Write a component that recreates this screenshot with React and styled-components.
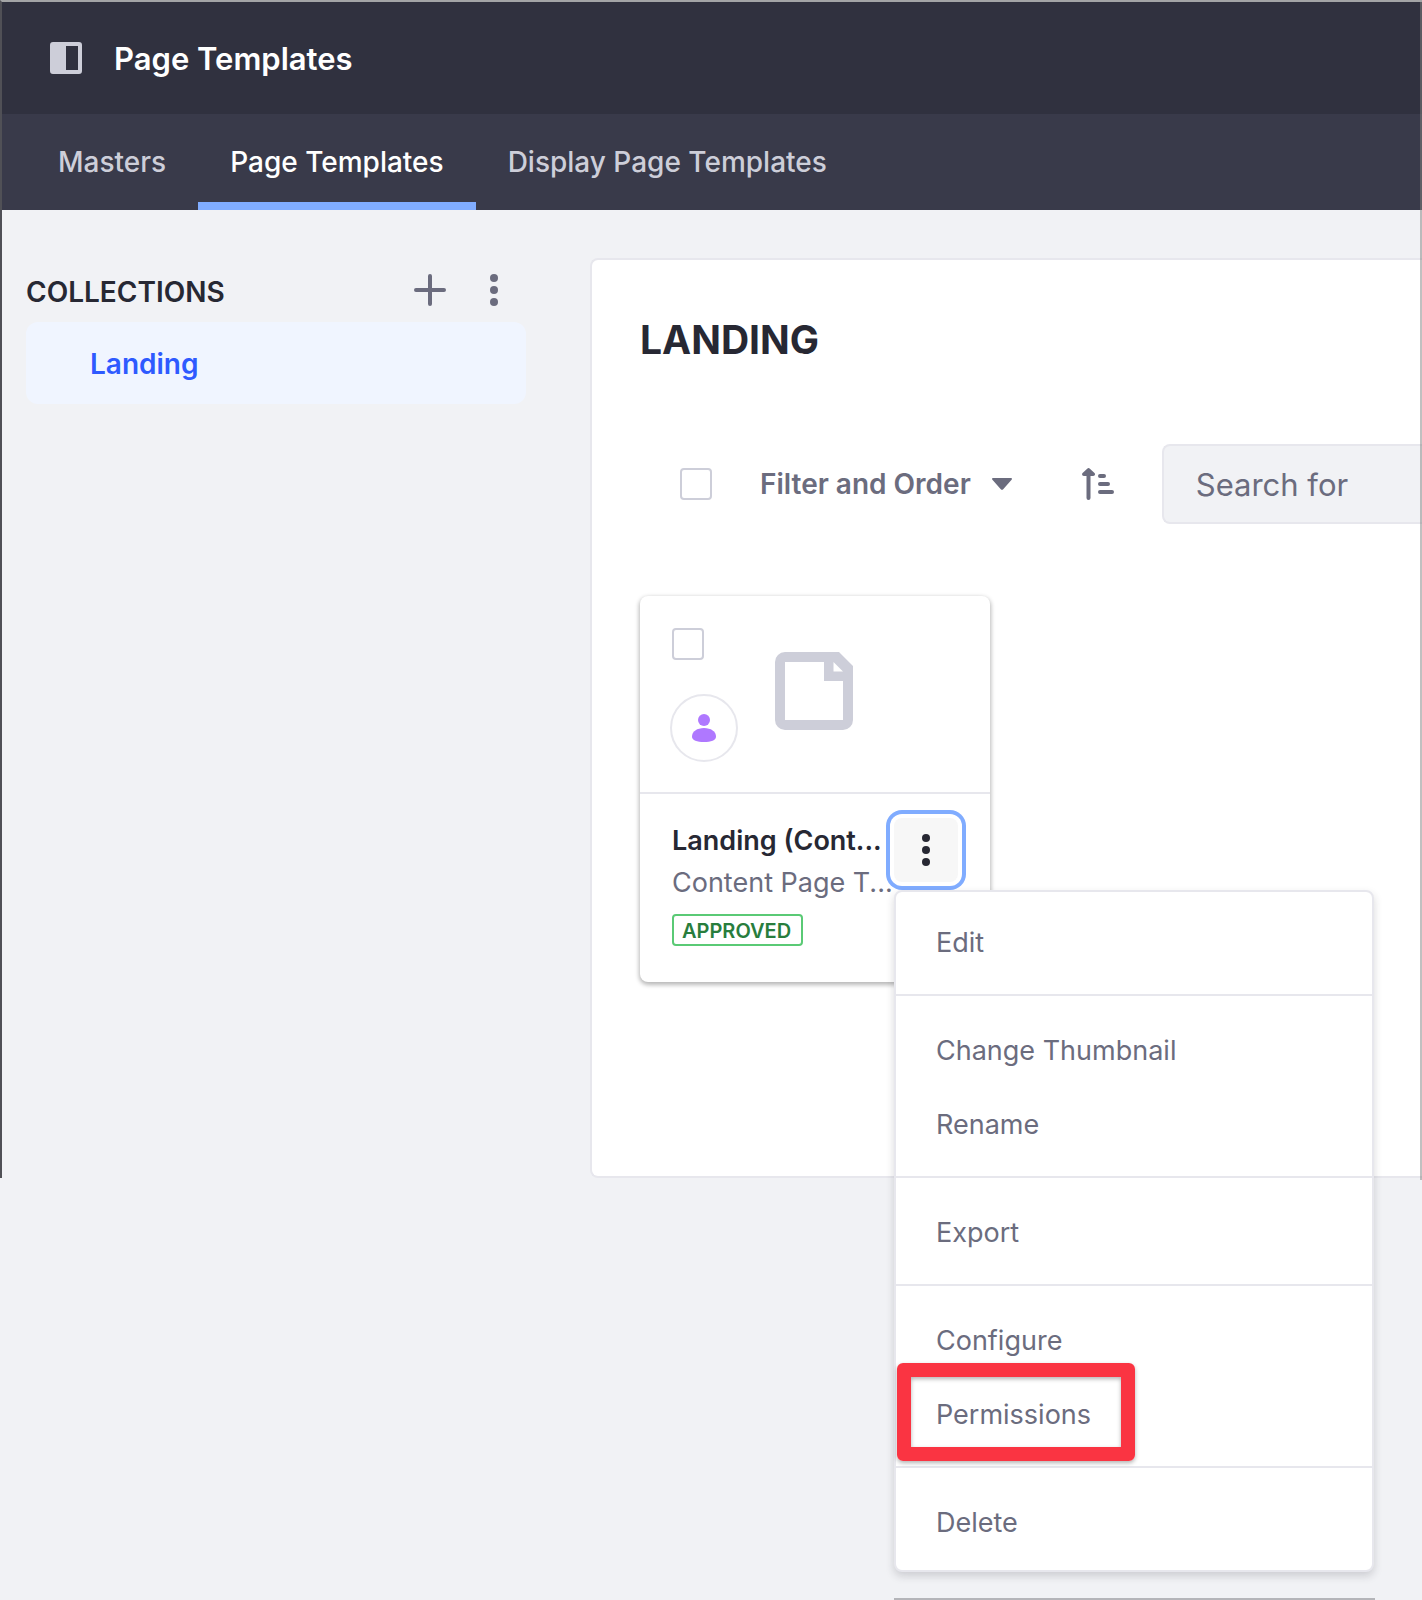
import React from "react";
import styled, { createGlobalStyle } from "styled-components";

const GlobalStyle = createGlobalStyle`
  *, *::before, *::after { box-sizing: border-box; }
  body {
    margin: 0;
    min-height: 100vh;
    overflow-x: hidden;
    background: #f1f2f5;
    color: #272833;
    font-family: Inter, "Liberation Sans", sans-serif;
    font-size: 28px;
    line-height: 32px;
  }
  button, input { font: inherit; color: inherit; }
  h1, h2, h3, p, ul { margin: 0; padding: 0; font: inherit; }
  ul { list-style: none; }
`;

const Frame = styled.div`
  position: relative;
  min-height: 1178px;
  border-top: 2px solid #a3a4a6;
  border-left: 2px solid #505056;

  &::after {
    content: "";
    position: absolute;
    top: 0;
    right: 0;
    bottom: -2px;
    width: 2px;
    background: rgba(131, 131, 131, 0.51);
    pointer-events: none;
  }
`;

const Header = styled.header`
  display: flex;
  align-items: center;
  gap: 32px;
  height: 112px;
  padding: 0 48px;
  background: #30313f;
  color: #fff;
`;

const IconButton = styled.button`
  display: flex;
  padding: 0;
  border: 0;
  background: none;
  color: ${(p) => p.$color || "#6b6c7e"};
  cursor: pointer;
`;

const PageTitle = styled.h1`
  padding-top: 2px;
  font-size: 31px;
  font-weight: 600;
`;

const Tabs = styled.nav`
  display: flex;
  height: 96px;
  padding: 0 24px;
  background: #393a4a;
`;

const Tab = styled.a`
  display: flex;
  align-items: center;
  padding: 0 32px;
  color: ${(p) => (p.$active ? "#fff" : "#cdced9")};
  font-weight: 500;
  text-decoration: none;
  box-shadow: ${(p) => (p.$active ? "inset 0 -8px #80acff" : "none")};
`;

const Body = styled.div`
  display: flex;
  gap: 64px;
  padding: 48px 0 0 24px;
`;

const Sidebar = styled.aside`
  flex: 0 0 500px;
`;

const SidebarHead = styled.div`
  display: flex;
  align-items: center;
  height: 64px;
  padding-right: 16px;
  gap: 32px;
`;

const SidebarTitle = styled.h2`
  flex: 1;
  padding-top: 4px;
  font-weight: 600;
`;

const CollectionLink = styled.a`
  display: flex;
  align-items: center;
  height: 82px;
  padding: 2px 64px 0;
  border-radius: 12px;
  background: #f0f5ff;
  color: #2e5aff;
  font-weight: 600;
  text-decoration: none;
`;

const Panel = styled.main`
  flex: 1;
  min-width: 0;
  min-height: 920px;
  padding: 56px 0 48px 48px;
  border: 2px solid #e7e7ed;
  border-right: 0;
  border-radius: 8px 0 0 8px;
  background: #fff;
`;

const PanelTitle = styled.h2`
  font-size: 39px;
  font-weight: 700;
  line-height: 48px;
`;

const Toolbar = styled.div`
  display: flex;
  align-items: center;
  height: 80px;
  margin: 80px 0 72px;
  padding-left: 40px;
`;

const Checkbox = styled.input.attrs({ type: "checkbox" })`
  appearance: none;
  flex: none;
  width: 32px;
  height: 32px;
  margin: 0;
  border: 2px solid #cdced9;
  border-radius: 4px;
  background: #fff;
`;

const FilterButton = styled(IconButton)`
  align-items: center;
  gap: 21px;
  margin: 0 70px 0 48px;
  font-weight: 600;
  white-space: nowrap;
`;

const SearchInput = styled.input`
  flex: 1;
  min-width: 0;
  height: 80px;
  margin-left: 48px;
  padding: 0 32px;
  border: 2px solid #e7e7ed;
  border-right: 0;
  border-radius: 8px 0 0 8px;
  background: #f1f2f5;
  font-size: 31px;
  outline: 0;

  &::placeholder { color: #6b6c7e; opacity: 1; }
`;

const Card = styled.article`
  width: 350px;
  border-radius: 8px;
  background: #fff;
  box-shadow: 0 2px 4px 1px rgba(0, 0, 0, 0.28);
`;

const CardPreview = styled.div`
  display: flex;
  gap: 37px;
  height: 198px;
  padding: 32px 30px;
  border-bottom: 2px solid #e7e7ed;
`;

const CardMarks = styled.div`
  display: flex;
  flex-direction: column;
  gap: 34px;

  & > input { margin-left: 2px; }
`;

const Sticker = styled.span`
  display: flex;
  flex: none;
  align-items: center;
  justify-content: center;
  width: 68px;
  height: 68px;
  border: 2px solid #e7e7ed;
  border-radius: 50%;
  background: #fff;
`;

const PreviewArt = styled.div`
  padding-top: 24px;
`;

const CardFooter = styled.div`
  display: flex;
  height: 188px;
  padding: 24px 32px 0;
`;

const CardText = styled.div`
  display: flex;
  flex-direction: column;
  align-items: flex-start;
  width: 222px;
  padding-top: 2px;
  font-size: 27px;
  line-height: 42px;
  white-space: nowrap;
`;

const CardTitle = styled.h3`
  font-weight: 600;
`;

const CardSubtitle = styled.p`
  color: #6b6c7e;
`;

const Label = styled.span`
  height: 32px;
  margin-top: 10px;
  padding: 1px 10px 0 8px;
  border: 2px solid #5aca75;
  border-radius: 4px;
  color: #287d3d;
  font-size: 20px;
  font-weight: 600;
  line-height: 28px;
`;

const Actions = styled.div`
  position: relative;
  flex: none;
  width: 64px;
  height: 64px;
`;

const ActionsButton = styled(IconButton)`
  align-items: center;
  justify-content: center;
  width: 64px;
  height: 64px;
  border-radius: 8px;
  background: #f7f7f7;
  box-shadow: 0 0 0 4px #fff, 0 0 0 8px #80acff;
`;

const Menu = styled.ul`
  position: absolute;
  z-index: 1;
  top: calc(100% + 8px);
  left: 0;
  width: 480px;
  padding: 12px 0;
  border: 2px solid #e7e7ed;
  border-radius: 8px;
  background: #fff;
  box-shadow: 0 4px 8px rgba(39, 40, 51, 0.18);

  &::after {
    content: "";
    position: absolute;
    top: calc(100% + 28px);
    left: -2px;
    right: -3px;
    height: 2px;
    background: #b4b5b9;
  }
`;

const MenuItem = styled.li`
  position: relative;
`;

const MenuButton = styled.button`
  display: block;
  width: 100%;
  height: 74px;
  padding: 4px 40px 0;
  border: 0;
  background: none;
  color: #6b6c7e;
  font-size: 27px;
  text-align: left;
  cursor: pointer;
`;

const Divider = styled.li`
  height: 2px;
  margin: 16px 0;
  background: #e7e7ed;
`;

const Highlight = styled.span`
  position: absolute;
  top: -13px;
  left: 1px;
  width: 238px;
  height: 98px;
  border: 14px solid #fa3442;
  border-radius: 6px;
  box-shadow: 0 2px 4px rgba(0, 0, 0, 0.3), inset 0 2px 4px rgba(0, 0, 0, 0.3);
  pointer-events: none;
`;

const Dots = () => (
  <svg width="32" height="32" viewBox="0 0 32 32" fill="currentColor" aria-hidden="true">
    <circle cx="16" cy="4" r="4" />
    <circle cx="16" cy="16" r="4" />
    <circle cx="16" cy="28" r="4" />
  </svg>
);

const PanelIcon = () => (
  <svg width="32" height="32" viewBox="0 0 32 32" fill="currentColor" aria-hidden="true">
    <path fillRule="evenodd" d="M3 0h26a3 3 0 0 1 3 3v26a3 3 0 0 1-3 3H3a3 3 0 0 1-3-3V3a3 3 0 0 1 3-3Zm13 4v24h12V4Z" />
  </svg>
);

const PlusIcon = () => (
  <svg width="32" height="32" viewBox="0 0 32 32" stroke="currentColor" strokeWidth="4" strokeLinecap="round" aria-hidden="true">
    <path d="M16 2v28M2 16h28" />
  </svg>
);

const CaretIcon = () => (
  <svg width="20" height="12" viewBox="0 0 20 12" fill="currentColor" aria-hidden="true">
    <path d="M1 0h18c1 0 1.300 1 .6 1.700l-8.400 9.500c-.7.800-1.700.8-2.400 0L.4 1.700C-.3 1 0 0 1 0Z" />
  </svg>
);

const SortIcon = () => (
  <svg width="32" height="32" viewBox="0 0 32 32" fill="none" stroke="currentColor" strokeWidth="4" strokeLinecap="round" aria-hidden="true">
    <path d="M6.500 4v26M18 8h4M18 16h8M18 24h12" />
    <path d="M5.200.7a2 2 0 0 1 2.700 0l4.600 4.400c1.400 1.500-.3 3.600-2.200 2.800H2.700C.8 8.700-.8 6.600.6 5.100Z" fill="currentColor" stroke="none" />
  </svg>
);

const UserIcon = () => (
  <svg width="24" height="28" viewBox="0 0 24 28" fill="#af78ff" aria-hidden="true">
    <circle cx="12" cy="6" r="6" />
    <path d="M12 14c7 0 12 3.500 12 8.500 0 4-5 5.500-12 5.500S0 26.500 0 22.500C0 17.500 5 14 12 14Z" />
  </svg>
);

const PageIcon = () => (
  <svg width="78" height="78" viewBox="0 0 78 78" fill="#cdced9" aria-hidden="true">
    <path fillRule="evenodd" d="M10 0h54l14 14v54a10 10 0 0 1-10 10H10A10 10 0 0 1 0 68V10A10 10 0 0 1 10 0Zm0 10v58h58V29H49V10Zm48.500 0v9.500H68Z" />
  </svg>
);

const menuGroups = [
  ["Edit"],
  ["Change Thumbnail", "Rename"],
  ["Export"],
  ["Configure", "Permissions"],
  ["Delete"],
];

export default function App() {
  return (
    <>
      <GlobalStyle />
      <Frame>
        <Header>
          <IconButton $color="#cdced9" aria-label="Toggle product menu">
            <PanelIcon />
          </IconButton>
          <PageTitle>Page Templates</PageTitle>
        </Header>
        <Tabs>
          <Tab href="#masters">Masters</Tab>
          <Tab href="#page-templates" $active aria-current="page">Page Templates</Tab>
          <Tab href="#display">Display Page Templates</Tab>
        </Tabs>
        <Body>
          <Sidebar>
            <SidebarHead>
              <SidebarTitle>COLLECTIONS</SidebarTitle>
              <IconButton aria-label="Add collection"><PlusIcon /></IconButton>
              <IconButton aria-label="Collection actions"><Dots /></IconButton>
            </SidebarHead>
            <CollectionLink href="#landing">Landing</CollectionLink>
          </Sidebar>
          <Panel>
            <PanelTitle>LANDING</PanelTitle>
            <Toolbar>
              <Checkbox aria-label="Select all" />
              <FilterButton>
                Filter and Order
                <CaretIcon />
              </FilterButton>
              <IconButton aria-label="Reverse sort direction"><SortIcon /></IconButton>
              <SearchInput type="text" placeholder="Search for" aria-label="Search for" />
            </Toolbar>
            <Card>
              <CardPreview>
                <CardMarks>
                  <Checkbox aria-label="Select Landing" />
                  <Sticker><UserIcon /></Sticker>
                </CardMarks>
                <PreviewArt><PageIcon /></PreviewArt>
              </CardPreview>
              <CardFooter>
                <CardText>
                  <CardTitle>Landing (Cont...</CardTitle>
                  <CardSubtitle>Content Page T...</CardSubtitle>
                  <Label>APPROVED</Label>
                </CardText>
                <Actions>
                  <ActionsButton $color="#272833" aria-label="More actions" aria-expanded="true">
                    <Dots />
                  </ActionsButton>
                  <Menu>
                    {menuGroups.map((group, i) => (
                      <React.Fragment key={group[0]}>
                        {i > 0 && <Divider role="separator" />}
                        {group.map((name) => (
                          <MenuItem key={name}>
                            <MenuButton>{name}</MenuButton>
                            {name === "Permissions" && <Highlight />}
                          </MenuItem>
                        ))}
                      </React.Fragment>
                    ))}
                  </Menu>
                </Actions>
              </CardFooter>
            </Card>
          </Panel>
        </Body>
      </Frame>
    </>
  );
}
